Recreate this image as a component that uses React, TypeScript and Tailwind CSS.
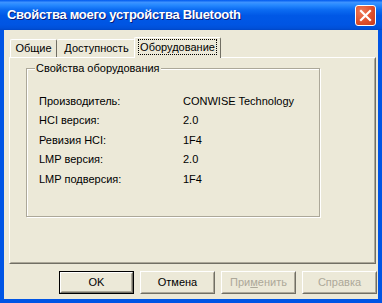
const font = "font-['Liberation_Sans',Arial,sans-serif]";

const rows: [string, string][] = [
  ['Производитель:', 'CONWISE Technology'],
  ['HCI версия:', '2.0'],
  ['Ревизия HCI:', '1F4'],
  ['LMP версия:', '2.0'],
  ['LMP подверсия:', '1F4'],
];

function Button({ children, isDefault, disabled }: { children: React.ReactNode; isDefault?: boolean; disabled?: boolean }) {
  return (
    <div
      className={`flex h-[23px] w-[75px] items-center justify-center text-[11px] ${
        isDefault ? 'border border-black' : ''
      } ${disabled ? 'text-[#aca899]' : 'text-black'}`}
    >
      <div className="flex h-full w-full items-center justify-center border border-t-white border-l-white border-r-[#716f64] border-b-[#716f64]">
        <div className="flex h-full w-full items-center justify-center border border-transparent border-r-[#aca899] border-b-[#aca899]">
          {children}
        </div>
      </div>
    </div>
  );
}

export default function App() {
  return (
    <div className={`flex h-[303px] w-[382px] flex-col bg-[#0055e5] ${font}`}>
      {/* title bar */}
      <div className="flex h-[30px] shrink-0 items-center justify-between bg-[linear-gradient(to_bottom,#0058ee_0%,#3d93ff_8%,#288aff_16%,#0c6cf2_32%,#0058e6_52%,#0055e3_82%,#0050d9_94%,#0046c6_100%)] pl-[7px] pr-[6px]">
        <span className="text-[13px] font-bold tracking-[-0.3px] text-white [text-shadow:1px_1px_0_#0a1e7a]">
          Свойства моего устройства Bluetooth
        </span>
        <div className="flex h-[21px] w-[21px] items-center justify-center rounded-[3px] border border-white bg-[radial-gradient(circle_at_30%_30%,#ee7b5a,#e0502c_55%,#c9391a)]">
          <svg width="13" height="13" viewBox="0 0 13 13">
            <path d="M2 2 L11 11 M11 2 L2 11" stroke="white" strokeWidth="2.2" strokeLinecap="square" />
          </svg>
        </div>
      </div>

      {/* client area */}
      <div className="mx-[4px] mb-[4px] flex flex-1 flex-col bg-[#ece9d8] text-[11px] text-black">
        {/* tabs */}
        <div className="mt-[6px] flex h-[21px] items-end pl-[6px]">
          <div className="flex h-[18px] w-[47px] items-center justify-center rounded-t-[2px] border-l border-t border-r border-l-white border-t-white border-r-[#716f64]">
            Общие
          </div>
          <div className="flex h-[18px] w-[78px] items-center justify-center rounded-t-[2px] border-t border-r border-t-white border-r-[#716f64] pl-[2px]">
            Доступность
          </div>
          <div className="relative z-10 -mb-[1px] -ml-[1px] flex h-[21px] w-[87px] items-start justify-center rounded-t-[2px] border-l border-t border-r border-l-white border-t-white border-r-[#716f64] bg-[#ece9d8] pt-[2px]">
            <span className="px-[1px] leading-[14px] outline-1 outline-dotted outline-black">Оборудование</span>
          </div>
        </div>

        {/* tab panel */}
        <div className="ml-[5px] mr-[2px] h-[207px] border border-t-white border-l-white border-r-[#716f64] border-b-[#716f64]">
          <div className="h-full w-full border border-transparent border-r-[#aca899] border-b-[#aca899] pl-[15px] pt-[9px]">
            {/* group box */}
            <div className="relative h-[149px] w-[294px] border border-[#aca899] shadow-[inset_1px_1px_0_white,1px_1px_0_white]">
              <span className="absolute -top-[8px] left-[8px] bg-[#ece9d8] px-[1px] leading-[14px]">Свойства оборудования</span>
              <div className="grid grid-cols-[144px_1fr] auto-rows-[19.5px] pl-[12px] pt-[22px]">
                {rows.map(([k, v]) => (
                  <div key={k} className="contents">
                    <div className="flex items-center">{k}</div>
                    <div className="flex items-center">{v}</div>
                  </div>
                ))}
              </div>
            </div>
          </div>
        </div>

        {/* buttons */}
        <div className="mr-[1px] mt-[7px] flex justify-end gap-[6px]">
          <Button isDefault>OK</Button>
          <Button>Отмена</Button>
          <Button disabled>
            <span>
              При<span className="underline">м</span>енить
            </span>
          </Button>
          <Button disabled>Справка</Button>
        </div>
      </div>
    </div>
  );
}
